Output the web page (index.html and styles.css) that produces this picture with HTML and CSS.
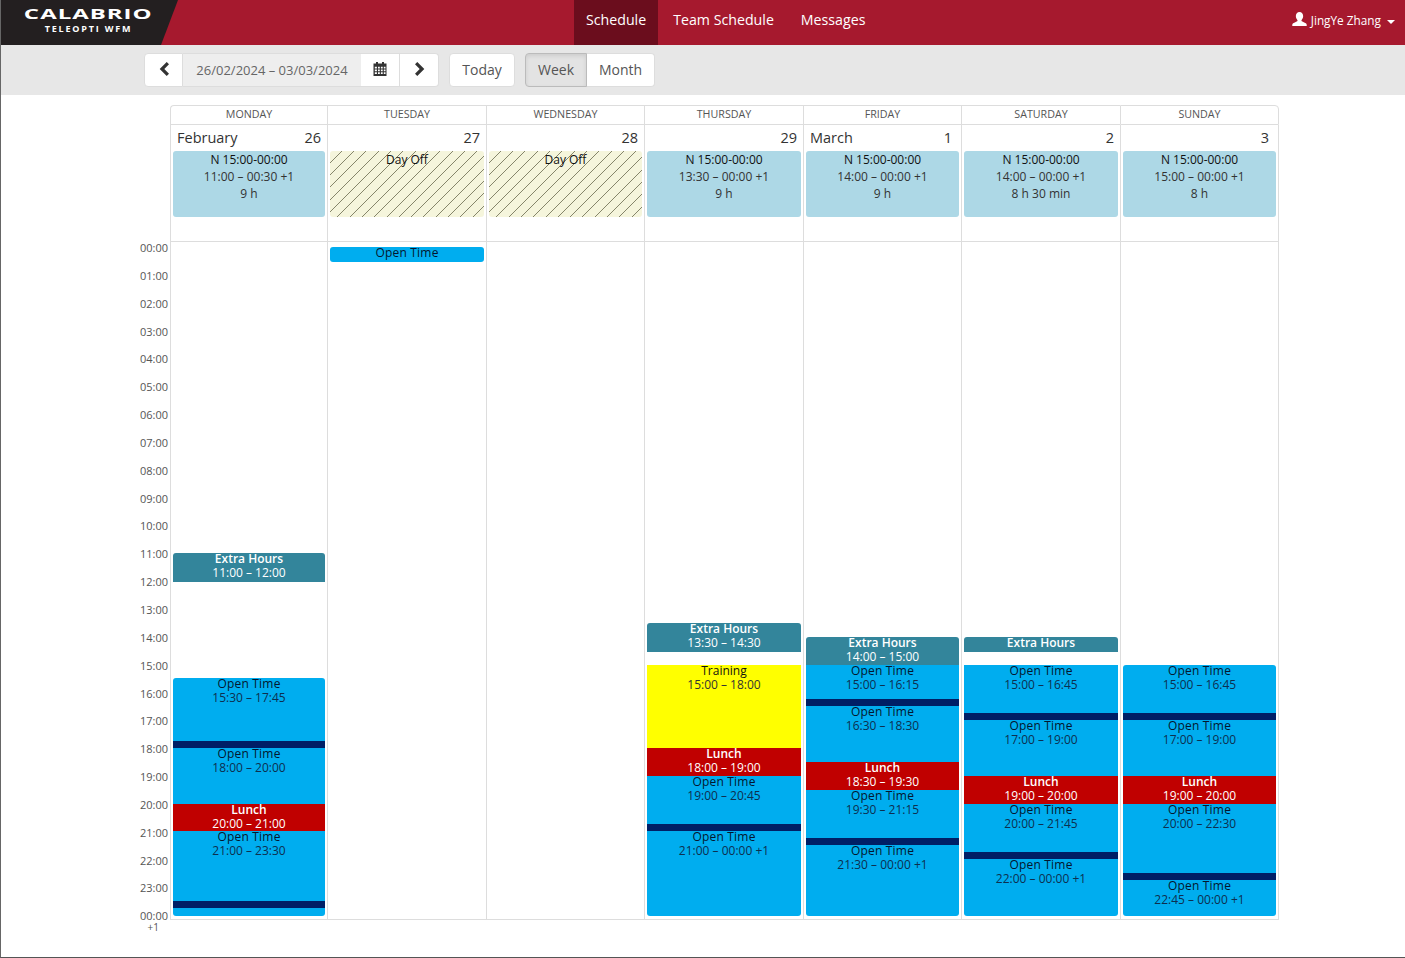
FILE: index.html
```html
<!DOCTYPE html>
<html lang="en">
  <head>
    <meta charset="UTF-8" />
    <meta name="viewport" content="width=device-width, initial-scale=1.0" />
    <title>Schedule</title>
    <link rel="stylesheet" href="styles.css">
  </head>
  <body>
    <header class="navbar">
      <a class="brand">
        <span class="brand-name">CALABRIO</span>
        <span class="brand-sub">TELEOPTI WFM</span>
      </a>
      <nav class="nav-links">
        <a class="nav-link active">Schedule</a>
        <a class="nav-link">Team Schedule</a>
        <a class="nav-link">Messages</a>
      </nav>
      <a class="user-menu">
        <svg class="user-icon" viewBox="0 0 16 16" width="15" height="15"><path fill="#fff" d="M8 0c2.400 0 3.900 1.800 3.900 4.300 0 1.700-.7 3.200-1.600 4.100-.3.400-.3 1.100.2 1.400l3.600 1.900c1 .5 1.600 1 1.600 2.300v1H.3v-1c0-1.300.6-1.800 1.600-2.300l3.600-1.900c.5-.3.5-1 .2-1.400C4.800 7.500 4.100 6 4.100 4.300 4.100 1.800 5.600 0 8 0z"/></svg>
        <span>JingYe Zhang</span>
        <span class="caret"></span>
      </a>
    </header>

    <div class="toolbar">
      <div class="btn-group">
        <button class="btn btn-icon">
          <svg viewBox="0 0 12 14" width="12" height="14"><path fill="#333" d="M8.700 0l2.300 2.300L6.300 7l4.700 4.700L8.700 14 1.700 7z"/></svg>
        </button>
        <span class="date-range">26/02/2024 – 03/03/2024</span>
        <button class="btn btn-icon btn-joined">
          <svg viewBox="0 0 14 14" width="14" height="14"><path fill="#333" fill-rule="evenodd" d="M3 0h2v1.500h4V0h2v1.500h2.500V14H.5V1.500H3zM1.800 4.800v1.700h2.100V4.800zm3.200 0v1.700h1.800V4.800zm2.900 0v1.700h1.800V4.800zm2.900 0v1.700h1.700V4.800zM1.800 7.500v1.700h2.100V7.500zm3.200 0v1.700h1.800V7.500zm2.900 0v1.700h1.800V7.500zm2.900 0v1.700h1.700V7.500zm-9 2.700v1.900h2.100v-1.900zm3.200 0v1.900h1.800v-1.900zm2.900 0v1.900h1.800v-1.900zm2.900 0v1.900h1.700v-1.900z"/></svg>
        </button>
        <button class="btn btn-icon btn-joined btn-next">
          <svg viewBox="0 0 12 14" width="12" height="14"><path fill="#333" d="M3.300 0L1 2.300 5.700 7 1 11.700 3.300 14l7-7z"/></svg>
        </button>
      </div>
      <button class="btn btn-today">Today</button>
      <div class="btn-group">
        <button class="btn btn-week active">Week</button>
        <button class="btn btn-month btn-joined">Month</button>
      </div>
    </div>

    <main class="week">
      <div></div>
      <div class="day-name">MONDAY</div>
      <div class="day-name">TUESDAY</div>
      <div class="day-name">WEDNESDAY</div>
      <div class="day-name">THURSDAY</div>
      <div class="day-name">FRIDAY</div>
      <div class="day-name">SATURDAY</div>
      <div class="day-name day-last">SUNDAY</div>

      <div></div>
      <div class="day-head">
        <div class="day-date"><span>February</span><span>26</span></div>
        <div class="summary"><b>N 15:00-00:00</b><span>11:00 – 00:30 +1</span><span>9 h</span></div>
      </div>
      <div class="day-head">
        <div class="day-date"><span></span><span>27</span></div>
        <div class="summary day-off"><b>Day Off</b></div>
      </div>
      <div class="day-head">
        <div class="day-date"><span></span><span>28</span></div>
        <div class="summary day-off"><b>Day Off</b></div>
      </div>
      <div class="day-head">
        <div class="day-date"><span></span><span>29</span></div>
        <div class="summary"><b>N 15:00-00:00</b><span>13:30 – 00:00 +1</span><span>9 h</span></div>
      </div>
      <div class="day-head">
        <div class="day-date"><span>March</span><span class="single">1</span></div>
        <div class="summary"><b>N 15:00-00:00</b><span>14:00 – 00:00 +1</span><span>9 h</span></div>
      </div>
      <div class="day-head">
        <div class="day-date"><span></span><span>2</span></div>
        <div class="summary"><b>N 15:00-00:00</b><span>14:00 – 00:00 +1</span><span>8 h 30 min</span></div>
      </div>
      <div class="day-head day-last">
        <div class="day-date"><span></span><span class="single">3</span></div>
        <div class="summary"><b>N 15:00-00:00</b><span>15:00 – 00:00 +1</span><span>8 h</span></div>
      </div>

      <div class="hours">
        <span>00:00</span><span>01:00</span><span>02:00</span><span>03:00</span><span>04:00</span>
        <span>05:00</span><span>06:00</span><span>07:00</span><span>08:00</span><span>09:00</span>
        <span>10:00</span><span>11:00</span><span>12:00</span><span>13:00</span><span>14:00</span>
        <span>15:00</span><span>16:00</span><span>17:00</span><span>18:00</span><span>19:00</span>
        <span>20:00</span><span>21:00</span><span>22:00</span><span>23:00</span>
        <span>00:00<small>+1</small></span>
      </div>

      <div class="day-col">
        <div class="ev extra round-t" style="--from:11;--to:12"><b>Extra Hours</b><span>11:00 – 12:00</span></div>
        <div class="ev open round-t" style="--from:15.5;--to:17.75"><b>Open Time</b><span>15:30 – 17:45</span></div>
        <div class="ev break" style="--from:17.75;--to:18"></div>
        <div class="ev open" style="--from:18;--to:20"><b>Open Time</b><span>18:00 – 20:00</span></div>
        <div class="ev lunch" style="--from:20;--to:21"><b>Lunch</b><span>20:00 – 21:00</span></div>
        <div class="ev open" style="--from:21;--to:23.5"><b>Open Time</b><span>21:00 – 23:30</span></div>
        <div class="ev break" style="--from:23.5;--to:23.75"></div>
        <div class="ev open round-b" style="--from:23.75;--to:24"></div>
      </div>
      <div class="day-col">
        <div class="ev open round-t round-b" style="--from:-0.03;--to:0.5"><b>Open Time</b></div>
      </div>
      <div class="day-col"></div>
      <div class="day-col">
        <div class="ev extra round-t" style="--from:13.5;--to:14.5"><b>Extra Hours</b><span>13:30 – 14:30</span></div>
        <div class="ev training" style="--from:15;--to:18"><b>Training</b><span>15:00 – 18:00</span></div>
        <div class="ev lunch" style="--from:18;--to:19"><b>Lunch</b><span>18:00 – 19:00</span></div>
        <div class="ev open" style="--from:19;--to:20.75"><b>Open Time</b><span>19:00 – 20:45</span></div>
        <div class="ev break" style="--from:20.75;--to:21"></div>
        <div class="ev open round-b" style="--from:21;--to:24"><b>Open Time</b><span>21:00 – 00:00 +1</span></div>
      </div>
      <div class="day-col">
        <div class="ev extra round-t" style="--from:14;--to:15"><b>Extra Hours</b><span>14:00 – 15:00</span></div>
        <div class="ev open" style="--from:15;--to:16.25"><b>Open Time</b><span>15:00 – 16:15</span></div>
        <div class="ev break" style="--from:16.25;--to:16.5"></div>
        <div class="ev open" style="--from:16.5;--to:18.5"><b>Open Time</b><span>16:30 – 18:30</span></div>
        <div class="ev lunch" style="--from:18.5;--to:19.5"><b>Lunch</b><span>18:30 – 19:30</span></div>
        <div class="ev open" style="--from:19.5;--to:21.25"><b>Open Time</b><span>19:30 – 21:15</span></div>
        <div class="ev break" style="--from:21.25;--to:21.5"></div>
        <div class="ev open round-b" style="--from:21.5;--to:24"><b>Open Time</b><span>21:30 – 00:00 +1</span></div>
      </div>
      <div class="day-col">
        <div class="ev extra round-t" style="--from:14;--to:14.5"><b>Extra Hours</b></div>
        <div class="ev open" style="--from:15;--to:16.75"><b>Open Time</b><span>15:00 – 16:45</span></div>
        <div class="ev break" style="--from:16.75;--to:17"></div>
        <div class="ev open" style="--from:17;--to:19"><b>Open Time</b><span>17:00 – 19:00</span></div>
        <div class="ev lunch" style="--from:19;--to:20"><b>Lunch</b><span>19:00 – 20:00</span></div>
        <div class="ev open" style="--from:20;--to:21.75"><b>Open Time</b><span>20:00 – 21:45</span></div>
        <div class="ev break" style="--from:21.75;--to:22"></div>
        <div class="ev open round-b" style="--from:22;--to:24"><b>Open Time</b><span>22:00 – 00:00 +1</span></div>
      </div>
      <div class="day-col day-last">
        <div class="ev open round-t" style="--from:15;--to:16.75"><b>Open Time</b><span>15:00 – 16:45</span></div>
        <div class="ev break" style="--from:16.75;--to:17"></div>
        <div class="ev open" style="--from:17;--to:19"><b>Open Time</b><span>17:00 – 19:00</span></div>
        <div class="ev lunch" style="--from:19;--to:20"><b>Lunch</b><span>19:00 – 20:00</span></div>
        <div class="ev open" style="--from:20;--to:22.5"><b>Open Time</b><span>20:00 – 22:30</span></div>
        <div class="ev break" style="--from:22.5;--to:22.75"></div>
        <div class="ev open round-b" style="--from:22.75;--to:24"><b>Open Time</b><span>22:45 – 00:00 +1</span></div>
      </div>
    </main>
  </body>
</html>
```

FILE: styles.css
```css
body {
  margin: 0;
  box-sizing: border-box;
  height: 958px;
  overflow: hidden;
  font-family: "Open Sans", sans-serif;
  font-size: 14px;
  color: #333;
  background: #fff;
  border-left: 1px solid #666;
  border-bottom: 1px solid #555;
}

/* top bar */
.navbar {
  display: flex;
  height: 45px;
  margin-left: -1px;
  background: #a6192e;
  color: #fff;
}
.brand {
  display: flex;
  flex-direction: column;
  align-items: center;
  box-sizing: border-box;
  width: 178px;
  padding: 4px 1px 0 0;
  background: #231f20;
  clip-path: polygon(0 0, 100% 0, 161px 100%, 0 100%);
}
.brand-name {
  font-size: 15px;
  font-weight: 700;
  letter-spacing: 0.6px;
  line-height: 19px;
  transform: scaleX(1.6);
}
.brand-sub {
  font-size: 9px;
  font-weight: 700;
  letter-spacing: 1.8px;
  line-height: 12px;
}
.nav-links {
  display: flex;
  margin-left: 396px;
}
.nav-link {
  padding: 0 12px;
  margin-left: 3px;
  font-size: 14.2px;
  line-height: 40px;
}
.nav-link.active {
  margin-left: 0;
  background: #6b0d1d;
}
.user-menu {
  display: flex;
  align-items: center;
  gap: 3px;
  margin-left: auto;
  padding: 0 10px 5px 0;
  font-size: 11.8px;
}
.user-icon {
  margin: -1px 1px 0 0;
}
.caret {
  width: 0;
  height: 0;
  margin: 3px 0 0 3px;
  border-top: 4px solid #fff;
  border-left: 4px solid transparent;
  border-right: 4px solid transparent;
}

/* date toolbar */
.toolbar {
  display: flex;
  align-items: center;
  gap: 10px;
  height: 50px;
  padding-left: 143px;
  background: #e7e7e7;
}
.btn-group {
  display: flex;
  height: 34px;
}
.btn {
  box-sizing: border-box;
  height: 34px;
  padding: 0 0 2px;
  font-family: inherit;
  font-size: 14px;
  color: #555;
  background: #fff;
  border: 1px solid #ddd;
  border-radius: 4px;
}
.btn-group .btn:first-child {
  border-radius: 4px 0 0 4px;
}
.btn-group .btn:last-child {
  border-radius: 0 4px 4px 0;
}
.btn-joined {
  border-left: 0;
}
.btn-icon {
  display: flex;
  align-items: center;
  justify-content: center;
  width: 39px;
  padding: 0 0 2px;
  border-radius: 0;
}
.btn-next {
  padding-left: 1px;
}
.date-range {
  box-sizing: border-box;
  width: 178px;
  font-size: 13px;
  line-height: 32px;
  text-align: center;
  color: #666;
  background: #eee;
  border-top: 1px solid #ddd;
  border-bottom: 1px solid #ddd;
}
.btn-today {
  width: 66px;
}
.btn-week {
  width: 62px;
}
.btn-week.active {
  background: #e3e3e3;
  border-color: #bbb;
  box-shadow: inset 0 2px 4px rgba(0, 0, 0, 0.1);
}
.btn-month {
  width: 68px;
}

/* week grid */
.week {
  --hour: 27.8px;
  display: grid;
  grid-template-columns: 169px 157px 159px 158px 159px 158px 159px 159px;
  grid-template-rows: 20px 116px 679px;
  margin-top: 10px;
}
.day-name {
  padding-bottom: 2px;
  font-size: 10.7px;
  line-height: 16px;
  text-align: center;
  color: #555;
  border-top: 1px solid #ddd;
  border-left: 1px solid #ddd;
  border-bottom: 1px solid #ddd;
}
.day-name:nth-child(2) {
  border-top-left-radius: 4px;
}
.day-name.day-last {
  border-top-right-radius: 4px;
}
.day-last {
  border-right: 1px solid #ddd;
}
.day-head {
  padding: 0 2px;
  border-left: 1px solid #ddd;
}
.day-date {
  display: flex;
  justify-content: space-between;
  height: 26px;
  padding: 0 4px;
  font-size: 14.5px;
  line-height: 26px;
}
.single {
  margin-right: 3px;
}
.summary {
  display: flex;
  flex-direction: column;
  align-items: center;
  height: 66px;
  font-size: 12px;
  line-height: 17px;
  background: #add8e6;
  border-radius: 3px;
}
.summary b {
  font-weight: 400;
  color: #111;
}
.day-off {
  background: repeating-linear-gradient(135deg, #f5f5dc 0, #f5f5dc 8px, #85856a 8px, #85856a 8.7px);
}
.hours {
  display: flex;
  flex-direction: column;
  align-items: flex-end;
  padding-right: 2px;
  font-size: 11px;
  color: #555;
}
.hours span {
  flex: none;
  height: 27.85px;
  line-height: 14px;
}
.hours small {
  display: block;
  padding-right: 9px;
  margin-top: -1px;
  font-size: 10px;
  line-height: 11px;
  text-align: right;
}
.day-col {
  position: relative;
  border-top: 1px solid #ddd;
  border-left: 1px solid #ddd;
  border-bottom: 1px solid #ddd;
}

/* schedule blocks sit on the day column by time of day */
.ev {
  --extra: 0px;
  position: absolute;
  left: 2px;
  right: 2px;
  top: calc(5.55px + var(--from) * var(--hour));
  height: calc((var(--to) - var(--from)) * var(--hour) + var(--extra));
  display: flex;
  flex-direction: column;
  align-items: center;
  font-size: 12px;
  line-height: 14px;
}
.ev b {
  margin-top: -1px;
  font-weight: 600;
}
.round-t {
  border-top-left-radius: 3px;
  border-top-right-radius: 3px;
}
.round-b {
  --extra: 1px;
  border-bottom-left-radius: 3px;
  border-bottom-right-radius: 3px;
}
.open {
  background: #00adef;
  color: #0d2f4f;
}
.open b {
  font-weight: 400;
  letter-spacing: 0.2px;
  color: #04162e;
}
.break {
  background: #001f66;
}
.lunch {
  background: #c00000;
  color: #fff;
}
.extra {
  --extra: 1px;
  background: #33859b;
  color: #fff;
}
.training {
  background: #ffff00;
  color: #333;
}
.training b {
  font-weight: 400;
  color: #111;
}
```
